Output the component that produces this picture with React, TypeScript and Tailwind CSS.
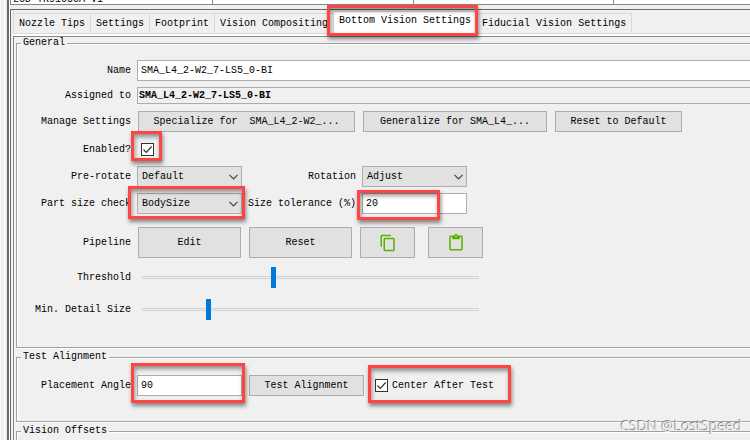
import React, { useState } from 'react';
import { MdContentCopy, MdContentPaste } from 'react-icons/md';

const tabs = [
  'Nozzle Tips',
  'Settings',
  'Footprint',
  'Vision Compositing',
  'Bottom Vision Settings',
  'Fiducial Vision Settings',
];

const buttonClass =
  'border border-[#adadad] bg-[#e1e1e1] text-center whitespace-pre hover:bg-[#e5f1fb]';
const inputClass = 'h-[21px] border-[#abadb3] bg-white pl-[3px] outline-none';

// Red frame drawn over the control it belongs to
const Highlight: React.FC<{ className: string }> = ({ className }) => (
  <span
    className={`pointer-events-none absolute z-10 border-3 border-[#ff4444] shadow-[1px_3px_4px_rgba(0,0,0,0.45),inset_1px_3px_4px_rgba(0,0,0,0.4)] ${className}`}
  />
);

interface RowProps {
  label: string;
  htmlFor?: string;
  className: string;
  children: React.ReactNode;
}

const Row: React.FC<RowProps> = ({ label, htmlFor, className, children }) => (
  <div className={`flex items-center gap-1.5 ${className}`}>
    <label htmlFor={htmlFor} className="w-[114px] shrink-0 text-right whitespace-nowrap">
      {label}
    </label>
    {children}
  </div>
);

interface GroupProps {
  title: string;
  className: string;
  children?: React.ReactNode;
}

const Group: React.FC<GroupProps> = ({ title, className, children }) => (
  <fieldset
    className={`min-w-0 border-y border-l border-[#a0a0a0] shadow-[0_1px_0_#fff,inset_1px_1px_0_#fff] ${className}`}
  >
    <legend className="ml-1 h-3 bg-[#f0f0f0] px-0.5 leading-3">{title}</legend>
    {children}
  </fieldset>
);

interface SelectProps {
  id: string;
  options: string[];
}

const Select: React.FC<SelectProps> = ({ id, options }) => (
  <span className="relative flex w-[105px] items-center">
    <select
      id={id}
      className="h-[21px] w-full appearance-none border border-[#adadad] bg-[#e1e1e1] pl-1 outline-none"
    >
      {options.map((option) => (
        <option key={option}>{option}</option>
      ))}
    </select>
    <svg
      viewBox="0 0 9 6"
      className="pointer-events-none absolute right-1 h-1.5 w-[9px] fill-none stroke-[#444]"
    >
      <path d="M0.5 0.8 L4.5 4.8 L8.5 0.8" strokeWidth="1.2" />
    </svg>
  </span>
);

interface CheckBoxProps {
  id: string;
}

const CheckBox: React.FC<CheckBoxProps> = ({ id }) => {
  const [checked, setChecked] = useState(true);

  return (
    <span className="relative flex size-[13px] items-center justify-center">
      <input
        id={id}
        type="checkbox"
        checked={checked}
        onChange={(e) => setChecked(e.target.checked)}
        className="size-[13px] appearance-none border border-[#333] bg-white"
      />
      {checked && (
        <svg viewBox="0 0 13 13" className="pointer-events-none absolute size-[13px] fill-none stroke-[#333]">
          <path d="M2.5 6.5 L5.2 9.3 L10.7 3.5" strokeWidth="1.2" />
        </svg>
      )}
    </span>
  );
};

const Slider: React.FC<{ id: string; initial: number }> = ({ id, initial }) => {
  const [value, setValue] = useState(initial);

  return (
    <input
      id={id}
      type="range"
      min={0}
      max={332}
      value={value}
      onChange={(e) => setValue(Number(e.target.value))}
      className="ml-[5px] h-[21px] w-[337px] appearance-none bg-transparent [&::-webkit-slider-runnable-track]:h-[3px] [&::-webkit-slider-runnable-track]:bg-[#e7eaea] [&::-webkit-slider-runnable-track]:shadow-[inset_0_0_0_1px_#d6d6d6] [&::-webkit-slider-thumb]:-mt-[9px] [&::-webkit-slider-thumb]:h-[21px] [&::-webkit-slider-thumb]:w-[5px] [&::-webkit-slider-thumb]:appearance-none [&::-webkit-slider-thumb]:bg-[#007ad9]"
    />
  );
};

const App: React.FC = () => {
  const [active, setActive] = useState('Bottom Vision Settings');

  return (
    <div className="relative flex h-screen overflow-hidden bg-[#f0f0f0] font-['Liberation_Mono',monospace] text-[10px] leading-3 text-black">
      <div className="flex w-2.5 shrink-0 border-l border-[#f8f8f8]">
        <div className="w-[3px] bg-[#f0f0f0]" />
        <div className="w-[3px] border-l border-white" />
        <div className="w-[3px] border-l-2 border-[#696969] bg-white" />
      </div>

      <div className="flex min-w-0 flex-1 flex-col">
        <div className="flex h-[5px] shrink-0 items-end border-b border-l border-[#828790] bg-white">
          <div className="w-[202px] shrink-0 border-r border-[#828790] pl-0.5 leading-2">LCD TR91050A V1</div>
          <div className="h-full w-[201px] shrink-0 border-r border-[#828790]" />
          <div className="h-full w-[200px] shrink-0 border-r border-[#828790]" />
        </div>

        <div className="mt-1 flex min-h-0 flex-1 flex-col border-t border-l border-[#696969] pl-0.5">
          <div role="tablist" className="flex h-[23px] shrink-0 items-end border-l border-[#d9d9d9]">
            {tabs.map((tab) => (
              <div key={tab} className="relative flex">
                <button
                  type="button"
                  role="tab"
                  aria-selected={tab === active}
                  onClick={() => setActive(tab)}
                  className={`border-t border-r border-[#d9d9d9] px-[5px] whitespace-nowrap ${
                    tab === active ? 'h-[22px] bg-white pb-1' : 'h-5 bg-[#f0f0f0]'
                  }`}
                >
                  {tab}
                </button>
                {tab === 'Bottom Vision Settings' && (
                  <Highlight className="-top-1.5 -right-px -bottom-[3px] -left-[7px]" />
                )}
              </div>
            ))}
          </div>

          <div className="flex min-h-0 flex-1 flex-col border-t border-[#d9d9d9] bg-white pt-0.5">
            <div className="min-h-0 flex-1 border-t border-l border-[#828790] bg-[#f0f0f0] pl-0.5">
              <Group title="General" className="h-[311px]">
                <Row label="Name" htmlFor="name" className="mt-[11px]">
                  <input
                    id="name"
                    defaultValue="SMA_L4_2-W2_7-LS5_0-BI"
                    className={`${inputClass} flex-1 border-y border-l`}
                  />
                </Row>
                <Row label="Assigned to" htmlFor="assigned" className="mt-1.5">
                  <input
                    id="assigned"
                    readOnly
                    value="SMA_L4_2-W2_7-LS5_0-BI"
                    className="h-[17px] flex-1 border-y border-l border-[#abadb3] bg-[#f0f0f0] pl-px font-bold outline-none"
                  />
                </Row>
                <Row label="Manage Settings" className="mt-[7px]">
                  <div className="ml-px flex gap-2">
                    <button type="button" className={`${buttonClass} h-[21px] w-[217px]`}>
                      {'Specialize for  SMA_L4_2-W2_...'}
                    </button>
                    <button type="button" className={`${buttonClass} h-[21px] w-[184px]`}>
                      Generalize for SMA_L4_...
                    </button>
                    <button type="button" className={`${buttonClass} h-[21px] w-[127px]`}>
                      Reset to Default
                    </button>
                  </div>
                </Row>
                <Row label="Enabled?" htmlFor="enabled" className="mt-[11px]">
                  <div className="relative ml-1">
                    <CheckBox id="enabled" />
                    <Highlight className="-top-3 -right-2 -bottom-[5px] -left-2.5" />
                  </div>
                </Row>
                <Row label="Pre-rotate" htmlFor="prerotate" className="mt-2.5">
                  <Select id="prerotate" options={['Default', 'Always', 'Never']} />
                  <label htmlFor="rotation" className="w-[108px] text-right">
                    Rotation
                  </label>
                  <Select id="rotation" options={['Adjust', 'Absolute']} />
                </Row>
                <Row label="Part size check" htmlFor="sizecheck" className="mt-1.5">
                  <div className="relative flex">
                    <Select id="sizecheck" options={['BodySize', 'PadExtents', 'Disabled']} />
                    <Highlight className="-top-[7px] -right-[3px] -bottom-[5px] -left-[9px]" />
                  </div>
                  <label htmlFor="tolerance" className="w-[108px] text-right whitespace-nowrap">
                    Size tolerance (%)
                  </label>
                  <div className="relative flex">
                    <input id="tolerance" defaultValue="20" className={`${inputClass} w-[105px] border`} />
                    <Highlight className="-top-[3px] right-[27px] -bottom-1.5 -left-[5px]" />
                  </div>
                </Row>
                <Row label="Pipeline" className="mt-[13px]">
                  <div className="ml-px flex gap-2">
                    <button type="button" className={`${buttonClass} h-[31px] w-[103px]`}>
                      Edit
                    </button>
                    <button type="button" className={`${buttonClass} h-[31px] w-[103px]`}>
                      Reset
                    </button>
                    <div className="flex gap-[13px]">
                      <button
                        type="button"
                        aria-label="Copy pipeline"
                        className={`${buttonClass} flex h-[31px] w-[55px] items-center justify-center`}
                      >
                        <MdContentCopy className="size-[18px] text-[#5bb000]" />
                      </button>
                      <button
                        type="button"
                        aria-label="Paste pipeline"
                        className={`${buttonClass} flex h-[31px] w-[55px] items-center justify-center`}
                      >
                        <MdContentPaste className="size-[18px] text-[#5bb000]" />
                      </button>
                    </div>
                  </div>
                </Row>
                <Row label="Threshold" htmlFor="threshold" className="mt-[9px]">
                  <Slider id="threshold" initial={129} />
                </Row>
                <Row label="Min. Detail Size" htmlFor="detail" className="mt-[11px]">
                  <Slider id="detail" initial={64} />
                </Row>
              </Group>

              <Group title="Test Alignment" className="mt-[3px] h-[71px]">
                <Row label="Placement Angle" htmlFor="angle" className="mt-3">
                  <div className="relative flex">
                    <input id="angle" defaultValue="90" className={`${inputClass} w-[105px] border`} />
                    <Highlight className="-top-3 -right-[3px] -bottom-[7px] -left-1.5" />
                  </div>
                  <button type="button" className={`${buttonClass} ml-px h-[21px] w-[115px]`}>
                    Test Alignment
                  </button>
                  <div className="relative ml-[5px] flex items-center gap-1">
                    <CheckBox id="center" />
                    <label htmlFor="center">Center After Test</label>
                    <Highlight className="-top-[14px] -right-[17px] -bottom-[11px] -left-[7px]" />
                  </div>
                </Row>
              </Group>

              <Group title="Vision Offsets" className="mt-[3px] h-[71px]" />
            </div>
          </div>
        </div>
      </div>

      <div className="absolute right-2 bottom-1 font-['Open_Sans',sans-serif] text-sm leading-5 text-[#ececec] [text-shadow:-1px_-1px_0_#888]">
        CSDN @LostSpeed
      </div>
    </div>
  );
};

export default App;
